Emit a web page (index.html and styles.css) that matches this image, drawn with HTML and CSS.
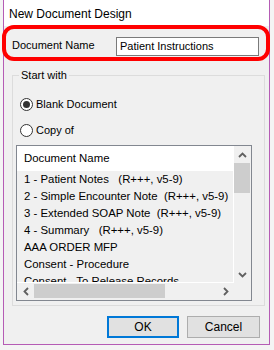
FILE: index.html
```html
<!DOCTYPE html>
<html>
<head>
<meta charset="utf-8">
<link rel="stylesheet" href="styles.css">
</head>
<body>
<div class="window">
  <div class="titlebar">New Document Design</div>
  <div class="content">
    <div class="name-row">
      <span class="label">Document Name</span>
      <div class="input">Patient Instructions</div>
    </div>
    <fieldset class="group">
      <legend>Start with</legend>
      <div class="radio-row"><span class="radio checked"></span><span>Blank Document</span></div>
      <div class="radio-row second"><span class="radio"></span><span>Copy of</span></div>
      <div class="listbox">
        <div class="list-main">
          <div class="list-header">Document Name</div>
          <div class="list-rows">
            <div class="row">1 - Patient Notes   (R+++, v5-9)</div>
            <div class="row">2 - Simple Encounter Note  (R+++, v5-9)</div>
            <div class="row">3 - Extended SOAP Note  (R+++, v5-9)</div>
            <div class="row">4 - Summary   (R+++, v5-9)</div>
            <div class="row">AAA ORDER MFP</div>
            <div class="row">Consent - Procedure</div>
            <div class="row">Consent - To Release Records</div>
          </div>
        </div>
        <div class="vscroll">
          <div class="arrow"><svg width="9" height="6" viewBox="0 0 9 6"><polyline points="1,5 4.5,1.5 8,5" fill="none" stroke="#606060" stroke-width="1.8"/></svg></div>
          <div class="vthumb"></div>
          <div class="vtrack"></div>
          <div class="arrow"><svg width="9" height="6" viewBox="0 0 9 6"><polyline points="1,1 4.5,4.5 8,1" fill="none" stroke="#606060" stroke-width="1.8"/></svg></div>
        </div>
        <div class="hscroll">
          <div class="arrow"><svg width="6" height="9" viewBox="0 0 6 9"><polyline points="5,1 1.5,4.5 5,8" fill="none" stroke="#606060" stroke-width="1.8"/></svg></div>
          <div class="hthumb"></div>
          <div class="htrack"></div>
          <div class="arrow"><svg width="6" height="9" viewBox="0 0 6 9"><polyline points="1,1 4.5,4.5 1,8" fill="none" stroke="#606060" stroke-width="1.8"/></svg></div>
        </div>
        <div class="corner"></div>
      </div>
    </fieldset>
    <div class="buttons">
      <div class="btn default">OK</div>
      <div class="btn">Cancel</div>
    </div>
  </div>
</div>
<div class="highlight"></div>
</body>
</html>
```

FILE: styles.css
```css
html, body {
  margin: 0;
  padding: 0;
  background: #f4f4f4;
  font-family: "Liberation Sans", Arial, sans-serif;
  font-size: 11px;
  color: #000;
}
body {
  width: 274px;
  height: 350px;
  overflow: hidden;
  position: relative;
}
.window {
  margin-left: 3px;
  width: 265px;
  height: 344px;
  border: 1px solid #b55cb5;
  border-top: none;
  background: #f0f0f0;
  display: flex;
  flex-direction: column;
}
.titlebar {
  height: 26px;
  line-height: 28px;
  background: #fff;
  padding-left: 5px;
  font-size: 12px;
}
.content {
  flex: 1;
  padding: 11px 0 0 8px;
  display: flex;
  flex-direction: column;
}
.name-row {
  display: flex;
  align-items: center;
  height: 19px;
}
.label {
  width: 104px;
  position: relative;
  top: -2px;
}
.input {
  box-sizing: border-box;
  width: 143px;
  height: 19px;
  border: 1px solid #7a7a7a;
  background: #fff;
  padding-left: 3px;
  line-height: 17px;
}
.group {
  margin: 12px 0 0 0;
  padding: 0 0 4px 0;
  width: 251px;
  border: 1px solid #dcdcdc;
  min-width: 0;
}
.group legend {
  margin-left: 6px;
  padding: 0 2px;
  line-height: 14px;
  height: 14px;
}
.radio-row {
  display: flex;
  align-items: center;
  height: 20px;
  margin-top: 12px;
  padding-left: 7px;
  gap: 3px;
}
.radio-row.second {
  margin-top: 6px;
}
.radio {
  box-sizing: border-box;
  width: 13px;
  height: 13px;
  border: 1px solid #333;
  border-radius: 50%;
  background: #fff;
  display: flex;
  align-items: center;
  justify-content: center;
}
.radio.checked::after {
  content: "";
  width: 7px;
  height: 7px;
  border-radius: 50%;
  background: #333;
}
.listbox {
  margin: 5px 0 0 3px;
  width: 234px;
  height: 154px;
  border: 1px solid #828790;
  background: #fff;
  display: grid;
  grid-template-columns: 1fr 17px;
  grid-template-rows: 1fr 17px;
  font-size: 11.4px;
}
.list-main {
  overflow: hidden;
  display: flex;
  flex-direction: column;
  min-height: 0;
}
.list-header {
  height: 25px;
  line-height: 25px;
  padding-left: 7px;
  background: #fff;
  flex: none;
}
.list-rows {
  flex: 1;
  background: #f0f0f0;
  border-right: 1px solid #fff;
  border-bottom: 1px solid #fff;
  overflow: hidden;
}
.row {
  height: 17px;
  line-height: 17px;
  padding-left: 7px;
  white-space: pre;
}
.vscroll {
  grid-row: 1;
  grid-column: 2;
  background: #f0f0f0;
  display: flex;
  flex-direction: column;
}
.vscroll .arrow {
  height: 17px;
  display: flex;
  align-items: center;
  justify-content: center;
  flex: none;
}
.vthumb {
  height: 30px;
  margin: 0 1px 0 0;
  background: #cdcdcd;
  flex: none;
}
.vtrack { flex: 1; }
.hscroll {
  grid-row: 2;
  grid-column: 1;
  background: #f0f0f0;
  display: flex;
}
.hscroll .arrow {
  width: 17px;
  display: flex;
  align-items: center;
  justify-content: center;
  flex: none;
}
.hthumb {
  width: 131px;
  margin: 1px 0 2px 0;
  background: #cdcdcd;
  flex: none;
}
.htrack { flex: 1; }
.corner {
  grid-row: 2;
  grid-column: 2;
  background: #f0f0f0;
}
.buttons {
  display: flex;
  justify-content: flex-end;
  gap: 8px;
  margin-top: 10px;
  padding-right: 9px;
}
.btn {
  box-sizing: border-box;
  height: 22px;
  width: 73px;
  background: #e1e1e1;
  border: 1px solid #adadad;
  display: flex;
  align-items: center;
  justify-content: center;
  font-size: 12px;
}
.btn.default {
  width: 72px;
  border: 2px solid #0078d7;
}
.highlight {
  position: absolute;
  left: 2px;
  top: 25px;
  width: 268px;
  height: 36px;
  box-sizing: border-box;
  border: 4px solid #ff0000;
  border-radius: 12px;
  pointer-events: none;
}
```
